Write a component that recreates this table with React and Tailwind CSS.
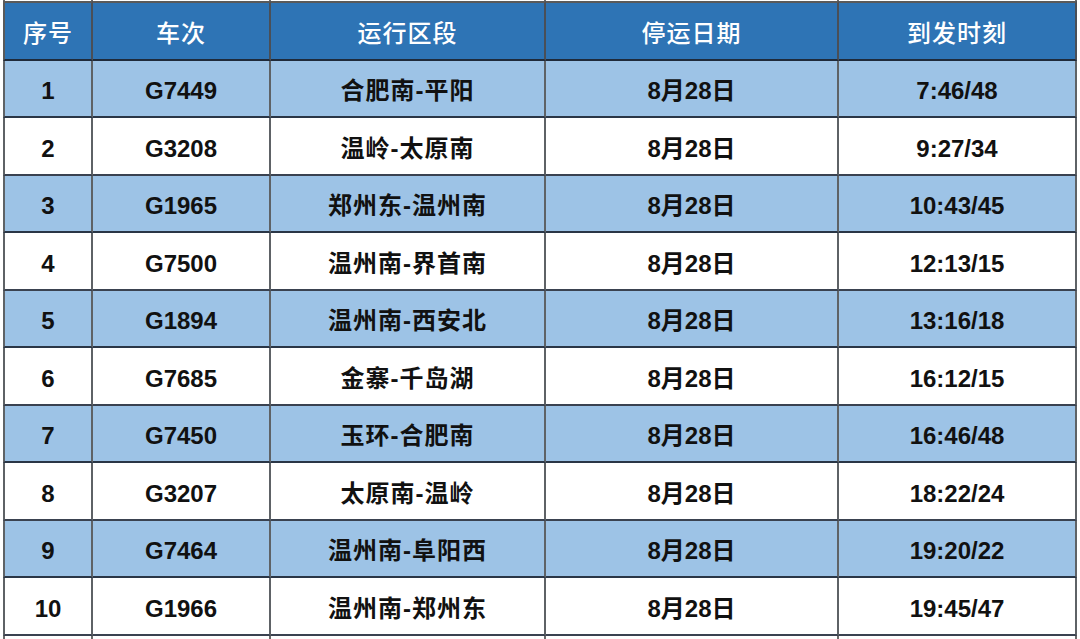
const HEAD = ["序号", "车次", "运行区段", "停运日期", "到发时刻"];

const ROWS = [
  ["1", "G7449", "合肥南-平阳", "8月28日", "7:46/48"],
  ["2", "G3208", "温岭-太原南", "8月28日", "9:27/34"],
  ["3", "G1965", "郑州东-温州南", "8月28日", "10:43/45"],
  ["4", "G7500", "温州南-界首南", "8月28日", "12:13/15"],
  ["5", "G1894", "温州南-西安北", "8月28日", "13:16/18"],
  ["6", "G7685", "金寨-千岛湖", "8月28日", "16:12/15"],
  ["7", "G7450", "玉环-合肥南", "8月28日", "16:46/48"],
  ["8", "G3207", "太原南-温岭", "8月28日", "18:22/24"],
  ["9", "G7464", "温州南-阜阳西", "8月28日", "19:20/22"],
  ["10", "G1966", "温州南-郑州东", "8月28日", "19:45/47"],
];

// column widths incl. right border
const COLS = ["w-[90px] border-l-2", "w-[178px]", "w-[275px]", "w-[293px]", "w-[238px]"];

function Strip({ h }) {
  return (
    <div className={`flex pl-[3px] ${h}`}>
      {COLS.map((c, i) => (
        <div key={i} className={`${c} shrink-0 border-r-2 border-[#6a6a6a]`} />
      ))}
    </div>
  );
}

export default function App() {
  return (
    <div
      className="h-[639px] w-[1080px] overflow-hidden bg-white text-[24px] leading-none"
      style={{ fontFamily: '"Liberation Sans", "Noto Sans CJK SC", sans-serif' }}
    >
      <Strip h="h-[1px]" />
      <div className="flex pl-[3px]">
        {HEAD.map((t, i) => (
          <div
            key={i}
            className={`${COLS[i]} flex h-[60px] shrink-0 items-center justify-center border-t-2 border-r-2 border-b-2 border-t-[#5a5a5a] border-r-[#4a4f57] border-b-[#1f2a3a] border-l-[#5a5a5a] bg-[#2e74b5] pt-[5px] font-medium tracking-[1px] text-white`}
          >
            {t}
          </div>
        ))}
      </div>
      {ROWS.map((r, ri) => (
        <div key={ri} className="flex pl-[3px]">
          {r.map((t, i) => (
            <div
              key={i}
              className={`${COLS[i]} ${ri % 2 === 0 ? "h-[57px] bg-[#9dc3e6] border-b-[#2a3646]" : "h-[58px] bg-white border-b-[#3a4250]"} ${i === 2 ? "tracking-[1px]" : ""} flex shrink-0 items-center justify-center border-r-2 border-b-2 border-r-[#5e6266] border-l-[#5e6266] pt-[5px] font-bold text-[#111]`}
            >
              {t}
            </div>
          ))}
        </div>
      ))}
      <Strip h="h-[4px]" />
    </div>
  );
}
